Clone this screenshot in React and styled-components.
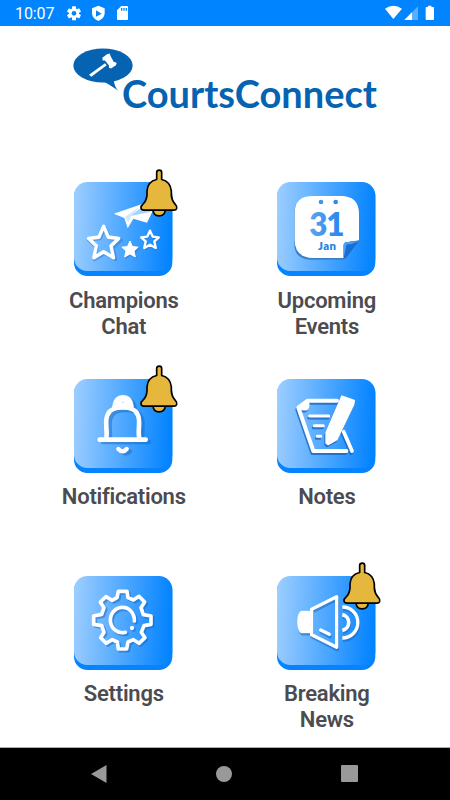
import React from 'react';
import styled, { createGlobalStyle } from 'styled-components';

const STAR = '0,-50 15,-17 49,-13 24,10 32,46 0,28 -32,46 -24,10 -49,-13 -15,-17';

const GEAR = 'M160 94 L186 94 L189 113 L205 120 L222 109 L239 126 L228 143 L235 164 L258 168 L258 193 L237 197 L229 217 L240 233 L222 250 L205 239 L189 246 L185 267 L160 267 L157 246 L141 239 L124 250 L107 233 L117 217 L110 197 L86 193 L86 168 L110 163 L117 143 L106 126 L123 110 L141 121 L156 113 Z';

const Bell = () => (
    <BellBadge viewBox="0 0 114 143">
        <path d="M39 121 Q40 140 57 140 Q75 140 76 121 Z" fill="#e6b73d" stroke="#000" strokeWidth="5" />
        <path
            d="M50 31 V10 Q50 3 58 3 Q65 3 65 10 V31 Q91 37 94 65 V78 Q95 94 107 107 Q112 112 110 118 Q108 123 102 123 H12 Q4 123 3 116 Q2 111 8 106 Q20 94 21 77 V65 Q23 37 50 31 Z"
            fill="#e6b73d"
            stroke="#000"
            strokeWidth="5"
            strokeLinejoin="round"
        />
    </BellBadge>
);

const Champions = () => (
    <g transform="translate(-27 -51)">
        <path d="M146 146 L238 115 L262 140 L246 173 L205 161 L188 190 L178 159 Z" fill="#fff" />
        <path d="M194 154 L236 122 L258 140 Z" fill="#a4d1ff" />
        <path d="M180 156 L222 126 L196 157 L190 172 Z" fill="#cfe7ff" />
        <g fill="none" strokeLinejoin="round">
            <polygon points={STAR} transform="translate(120 238)" stroke="#2f7fd6" strokeOpacity=".55" strokeWidth="10" />
            <polygon points={STAR} transform="translate(116 233) scale(.92 .98)" stroke="#fff" strokeWidth="11" />
            <polygon points={STAR} transform="translate(199 257) scale(.5)" fill="#2f7fd6" fillOpacity=".6" stroke="#2f7fd6" strokeOpacity=".3" strokeWidth="8" />
            <polygon points={STAR} transform="translate(195 253) scale(.5)" fill="#fff" stroke="#fff" strokeWidth="6" />
            <polygon points={STAR} transform="translate(258 228) scale(.54)" stroke="#2f7fd6" strokeOpacity=".55" strokeWidth="13" />
            <polygon points={STAR} transform="translate(255 224) scale(.54)" stroke="#fff" strokeWidth="13" />
        </g>
    </g>
);

const Calendar = () => (
    <g transform="translate(-36 -51)">
        <defs>
            <linearGradient id="day" x1="0" x2="1">
                <stop offset="0" stopColor="#5ba5ee" />
                <stop offset="1" stopColor="#2283ee" />
            </linearGradient>
        </defs>
        <path d="M88 145 Q88 97 135 97 H236 Q281 97 281 145 V231 L237 284 H135 Q88 282 88 236 Z" fill="#3c80c8" />
        <path d="M89 143 Q89 93 143 93 H228 Q282 93 282 147 V226 L244 232 Q235 234 236 242 V279 H143 Q89 277 89 225 Z" fill="#fff" />
        <path d="M282 227 L242 280 L236 279 V242 Q235 233 245 232 Z" fill="#1c6cd2" />
        <path d="M236 279 V242 Q235 233 245 232 L282 227 Q263 238 248 238 Q242 239 243 247 Z" fill="#48a2f8" />
        <circle cx="168" cy="111" r="7" fill="#4794e2" />
        <circle cx="212" cy="111" r="7" fill="#2e89ea" />
        <DayText x="133" y="213" textLength="105" fill="url(#day)">31</DayText>
        <MonthText x="159" y="256" textLength="54">Jan</MonthText>
    </g>
);

const BellOutline = ({ color }) => (
    <g fill="none" stroke={color} strokeLinecap="round" strokeLinejoin="round">
        <path d="M104 239 H242" strokeWidth="14" />
        <path d="M123 237 C130 218 116 180 129 162 C140 136 206 136 217 162 C230 180 215 218 224 237" strokeWidth="14" />
        <path d="M143 137 Q147 106 174 106 Q201 106 205 137 L205 146 H143 Z" fill={color} strokeWidth="2" />
        <path d="M160 267 Q173 281 185 267" strokeWidth="13" />
    </g>
);

const Notifications = () => (
    <g transform="translate(-27 -57)">
        <g transform="translate(10 7)" opacity=".45"><BellOutline color="#1762bc" /></g>
        <BellOutline color="#fff" />
        <circle cx="174" cy="127" r="2.5" fill="#b5d7fb" />
    </g>
);

const NoteSheet = ({ color }) => (
    <g fill="none" stroke={color} strokeLinecap="round" strokeLinejoin="round">
        <path d="M217 122 H129 L101 143 L146 273 H245" strokeWidth="12" />
        <path d="M129 122 L101 143 L108 148 L124 149 Q133 145 132 132 Z" fill={color} strokeWidth="5" />
        <path d="M237 215 L262 273" strokeWidth="11" />
        <path d="M135 168 H192 M149 197 H176 M158 229 H168" strokeWidth="9" />
        <path d="M232 109 L268 122 L266 134 L216 238 L190 253 L185 249 L185 218 Z" fill={color} strokeWidth="6" />
    </g>
);

const Notes = () => (
    <g transform="translate(-37 -57)">
        <g transform="translate(-3 6)" opacity=".75"><NoteSheet color="#1762bc" /></g>
        <NoteSheet color="#fff" />
    </g>
);

const GearShape = ({ color }) => (
    <g fill="none" stroke={color} strokeLinecap="round" strokeLinejoin="round">
        <path d={GEAR} strokeWidth="11" />
        <path d="M208 183 A36 38 0 1 0 181 217" strokeWidth="11" />
        <circle cx="201" cy="204" r="6.5" fill={color} stroke="none" />
    </g>
);

const Settings = () => (
    <g transform="translate(-27 -48)">
        <g transform="translate(5 5)" opacity=".5"><GearShape color="#1762bc" /></g>
        <GearShape color="#fff" />
    </g>
);

const Speaker = ({ color }) => (
    <g fill="none" stroke={color} strokeLinecap="round" strokeLinejoin="round">
        <path d="M138 168 H108 Q98 174 97 201 Q98 228 108 234 H138 Z" fill={color} strokeWidth="1" />
        <path d="M215 125 L140 163 V239 L215 277 Z" strokeWidth="10" />
        <path d="M167 225 L193 238" strokeWidth="10" />
        <path d="M232 156 A46 46 0 0 1 232 249" strokeWidth="10" strokeLinecap="butt" />
        <path d="M232 179 A24 24 0 0 1 232 226" strokeWidth="11" strokeLinecap="butt" />
    </g>
);

const News = () => (
    <g transform="translate(-36 -63)">
        <g transform="translate(2 7)" opacity=".5"><Speaker color="#1762bc" /></g>
        <Speaker color="#fff" />
    </g>
);

const items = [
    { label: 'Champions Chat', Icon: Champions, alert: true },
    { label: 'Upcoming Events', Icon: Calendar },
    { label: 'Notifications', Icon: Notifications, alert: true },
    { label: 'Notes', Icon: Notes },
    { label: 'Settings', Icon: Settings },
    { label: 'Breaking News', Icon: News, alert: true },
];

const StatusIcons = () => (
    <svg width="64" height="18" viewBox="0 0 192 54" fill="#fff">
        <g transform="translate(-201 -12)">
            <g transform="translate(222 40)">
                <circle r="15" />
                {[0, 60, 120].map(a => (
                    <rect key={a} x="-6" y="-21" width="12" height="42" rx="2" transform={`rotate(${a})`} />
                ))}
                <circle r="7" fill="#0084ff" />
            </g>
            <path d="M295 17 L314 25 V40 Q313 56 295 63 Q277 56 276 40 V25 Z" />
            <path d="M288 31 L305 41 L288 50 Z" fill="#0084ff" />
            <path d="M364 18 H381 Q384 18 384 21 V57 Q384 60 381 60 H354 Q351 60 351 57 V31 Z" />
            <path d="M363 24 H367 V32 H363 Z M370 24 H374 V32 H370 Z M377 24 H381 V32 H377 Z" fill="#0084ff" />
        </g>
    </svg>
);

const SignalIcons = () => (
    <svg width="50" height="18" viewBox="0 0 150 54" fill="#fff">
        <g transform="translate(-480 -12)">
            <path d="M480 26 Q505 9 531 26 L505 57 Z" />
            <path d="M579 19 V60 H538 Z" opacity=".35" />
            <path d="M561 37 V60 H538 Z" />
            <path d="M609 17 H619 V21 H625 Q627 21 627 24 V57 Q627 60 624 60 H605 Q602 60 602 57 V24 Q602 21 605 21 H609 Z" />
        </g>
    </svg>
);

const App = () => {
    return (
        <Screen>
            <GlobalStyle />
            <StatusBar>
                <Clock>10:07</Clock>
                <StatusIcons />
                <Spacer />
                <SignalIcons />
            </StatusBar>
            <Logo>
                <Bubble viewBox="0 0 180 128">
                    <g transform="translate(-23 -23)">
                        <ellipse cx="113" cy="75" rx="89" ry="51" fill="#0563b1" />
                        <path d="M111 122 Q131 130 159 151 Q147 139 145 117 Z" fill="#0563b1" />
                        <path d="M71 103 L119 68 L124 74 L78 109 Z" fill="#fff" />
                        <path d="M111 52 L125 41 L133 39 L136 47 L145 64 L154 67 L152 74 L137 84 L131 82 L131 75 L119 60 L112 60 Z" fill="#fff" />
                    </g>
                </Bubble>
                <Brand>CourtsConnect</Brand>
            </Logo>
            <Menu>
                {items.map(({ label, Icon, alert }) => (
                    <MenuItem key={label}>
                        <Tile>
                            <TileArt viewBox="0 0 294 282">
                                <defs>
                                    <linearGradient id="face" x1="0" y1=".46" x2="1" y2=".5">
                                        <stop offset="0" stopColor="#9bcdff" />
                                        <stop offset=".96" stopColor="#0785ff" />
                                        <stop offset="1" stopColor="#0084ff" />
                                    </linearGradient>
                                </defs>
                                <rect y="4" width="295" height="278" rx="40" fill="#0683ff" />
                                <rect width="295" height="267" rx="40" fill="url(#face)" />
                                <Icon />
                            </TileArt>
                            {alert && <Bell />}
                        </Tile>
                        <Label>{label}</Label>
                    </MenuItem>
                ))}
            </Menu>
            <NavBar>
                <svg width="16" height="18" viewBox="0 0 16 18"><path d="M0 9 L15.5 0 V18 Z" /></svg>
                <svg width="16" height="16" viewBox="0 0 16 16"><circle cx="8" cy="8" r="8" /></svg>
                <svg width="17" height="17" viewBox="0 0 17 17"><rect width="17" height="17" rx="1" /></svg>
            </NavBar>
        </Screen>
    );
};

export default App;


const GlobalStyle = createGlobalStyle`
    body {
        margin: 0;
        background: #fff;
    }
`

const Screen = styled.div`
    display: flex;
    flex-direction: column;
    width: 450px;
    height: 800px;
    overflow: hidden;
    background: #fff;
    font-family: Roboto, "Liberation Sans", sans-serif;
`

const StatusBar = styled.header`
    display: flex;
    align-items: center;
    box-sizing: border-box;
    height: 26px;
    padding: 0 15px 0 15px;
    background: #0084ff;
`

const Clock = styled.span`
    width: 52px;
    padding-top: 2px;
    font-size: 16px;
    line-height: 20px;
    font-weight: 450;
    letter-spacing: -0.1px;
    color: #fff;
`

const Spacer = styled.div`
    flex: 1;
`

const Logo = styled.div`
    display: flex;
    align-items: flex-start;
    height: 134.2px;
    padding: 22px 0 0 73px;
`

const Bubble = styled.svg`
    flex: none;
    width: 60px;
    height: 43px;
`

const Brand = styled.span`
    margin: 21px 0 0 -11px;
    font-family: Lato, sans-serif;
    font-size: 38px;
    line-height: 48px;
    font-weight: 700;
    color: #0563b1;
`

const Menu = styled.main`
    display: grid;
    grid-template-columns: 203px 203px;
    grid-template-rows: repeat(3, 196.67px);
    height: 564.8px;
    padding-left: 22.3px;
`

const MenuItem = styled.div`
    display: flex;
    flex-direction: column;
    align-items: center;
`

const Tile = styled.div`
    position: relative;
    width: 99px;
    height: 94px;
`

const TileArt = styled.svg`
    display: block;
    width: 98px;
    height: 94px;
    overflow: visible;
`

const BellBadge = styled.svg`
    position: absolute;
    top: -13.5px;
    left: 65.3px;
    width: 38px;
    height: 48px;
    overflow: visible;
`

const Label = styled.div`
    width: 130px;
    margin-top: 11.4px;
    font-size: 22px;
    line-height: 26px;
    font-weight: 650;
    letter-spacing: -0.25px;
    text-align: center;
    color: #4b4b50;
`

const DayText = styled.text`
    font: 800 94px Lato, sans-serif;
`

const MonthText = styled.text`
    font: 800 34px Lato, sans-serif;
    fill: #2583e2;
`

const NavBar = styled.nav`
    display: flex;
    align-items: center;
    justify-content: space-between;
    flex: 1;
    box-sizing: border-box;
    padding: 0 92px 0 91px;
    border-top: 1px solid #aaa;
    background: #000;

    svg {
        fill: #999;
    }
`
